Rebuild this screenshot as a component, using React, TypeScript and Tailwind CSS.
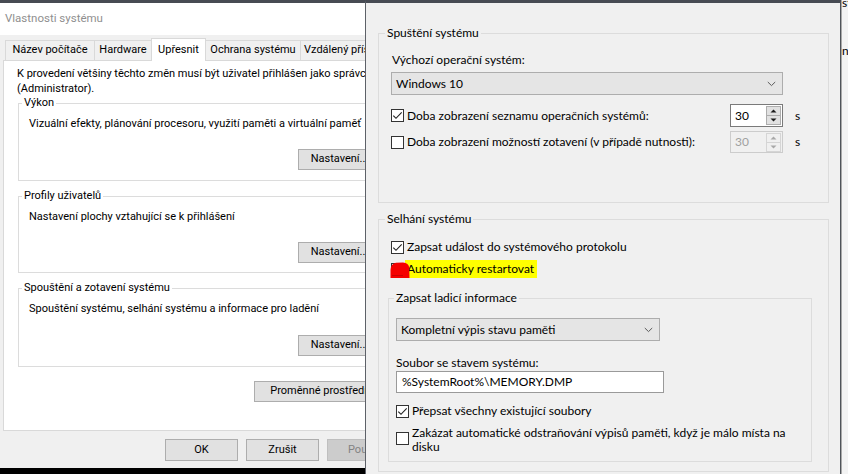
import React from "react";

function Check({ checked = false, className = "" }: { checked?: boolean; className?: string }) {
  return (
    <span className={"w-[13px] h-[13px] shrink-0 border border-[#333333] bg-white flex items-center justify-center " + className}>
      {checked && (
        <svg width="11" height="11" viewBox="0 0 11 11">
          <path d="M1.3 5.6 L4 8.3 L9.7 2.3" fill="none" stroke="#222222" strokeWidth="1.15" />
        </svg>
      )}
    </span>
  );
}

function Chevron() {
  return (
    <svg width="9" height="6" viewBox="0 0 9 6">
      <path d="M0.8 1 L4.5 4.6 L8.2 1" fill="none" stroke="#5a5a5a" strokeWidth="1" />
    </svg>
  );
}

function Combo({ children, className = "" }: { children: React.ReactNode; className?: string }) {
  return (
    <div className={"h-[23px] border border-[#adadad] bg-[#e5e5e5] flex items-center justify-between pl-[4px] pr-[6px] " + className}>
      <span>{children}</span>
      <Chevron />
    </div>
  );
}

function Arrow({ up, color }: { up: boolean; color: string }) {
  return (
    <svg width="7" height="4" viewBox="0 0 7 4">
      {up ? <path d="M0.5 3.5 L3.5 0.5 L6.5 3.5 Z" fill={color} /> : <path d="M0.5 0.5 L3.5 3.5 L6.5 0.5 Z" fill={color} />}
    </svg>
  );
}

function Spin({ disabled = false, className = "" }: { disabled?: boolean; className?: string }) {
  return (
    <div
      className={
        "w-[53px] flex items-stretch border " +
        (disabled ? "h-[22px] border-[#cccccc] bg-[#f0f0f0] text-[#a0a0a0] " : "h-[23px] border-[#7a7a7a] bg-white text-black ") +
        className
      }
    >
      <span className="flex-1 flex items-center pl-[4px]">30</span>
      <div className="flex flex-col justify-center gap-0 pr-px">
        <div className={"w-[15px] h-[10px] border flex items-center justify-center " + (disabled ? "border-[#d5d5d5] bg-[#f0f0f0]" : "border-[#adadad] bg-[#e1e1e1]")}>
          <Arrow up color={disabled ? "#a8a8a8" : "#1a1a1a"} />
        </div>
        <div className={"w-[15px] h-[10px] border -mt-px flex items-center justify-center " + (disabled ? "border-[#d5d5d5] bg-[#f0f0f0]" : "border-[#adadad] bg-[#e1e1e1]")}>
          <Arrow up={false} color={disabled ? "#a8a8a8" : "#1a1a1a"} />
        </div>
      </div>
    </div>
  );
}

function LBtn({ children, className = "", disabled = false }: { children: React.ReactNode; className?: string; disabled?: boolean }) {
  return (
    <button
      type="button"
      className={
        "flex items-center justify-center border whitespace-nowrap " +
        (disabled ? "border-[#bfbfbf] bg-[#cccccc] text-[#838383] " : "border-[#adadad] bg-[#e1e1e1] text-black ") +
        className
      }
    >
      {children}
    </button>
  );
}

function Tab({ children, w, selected = false, first = false }: { children: React.ReactNode; w: string; selected?: boolean; first?: boolean }) {
  return (
    <div
      className={
        "flex items-center border-t border-l border-r border-[#d9d9d9] whitespace-nowrap shrink-0 " +
        (first ? "" : "-ml-px ") +
        (selected ? "h-[23px] -mb-px bg-white relative z-10 " : "h-[20px] bg-[#f0f0f0] ") +
        w
      }
    >
      {children}
    </div>
  );
}

function LeftDialog() {
  return (
    <div className="w-[365px] h-[474px] shrink-0 overflow-hidden bg-black">
      <div className="w-[410px] h-[468px] bg-[#f0f0f0] border-t-[3px] border-[#474b53] flex flex-col font-['Roboto',sans-serif] text-[11px] text-black">
        <div className="h-[32px] bg-white pl-[5px] flex items-center text-[#8f8f8f] text-[11.5px]">Vlastnosti systému</div>
        <div className="px-[3px] pt-[3px] flex flex-col">
          <div className="flex items-end h-[22px] pl-[2px] relative z-10">
            <Tab w="w-[90px] justify-center" first>Název počítače</Tab>
            <Tab w="w-[58px] justify-center">Hardware</Tab>
            <Tab w="w-[55px] justify-center" selected>Upřesnit</Tab>
            <Tab w="w-[96px] justify-center">Ochrana systému</Tab>
            <Tab w="w-[96px] pl-[3px]">Vzdálený přístup</Tab>
          </div>
          <div className="h-[371px] bg-white border border-[#d9d9d9] px-[14px] pt-[5px] flex flex-col">
            <p className="leading-[15px] whitespace-nowrap -ml-px">
              K provedení většiny těchto změn musí být uživatel přihlášen jako správce
              <br />
              (Administrator).
            </p>
            <fieldset className="min-w-0 border border-[#dcdcdc] -mt-px px-[10px] pt-[5px] pb-[10px]">
              <legend className="-ml-[7px] px-[2px] leading-[16px]">Výkon</legend>
              <div className="leading-[15px] whitespace-nowrap">Vizuální efekty, plánování procesoru, využití paměti a virtuální paměť</div>
              <div className="flex justify-end mt-[18px]">
                <LBtn className="w-[83px] h-[21px]">Nastavení...</LBtn>
              </div>
            </fieldset>
            <fieldset className="min-w-0 border border-[#dcdcdc] mt-[7px] px-[10px] pt-[5px] pb-[9px]">
              <legend className="-ml-[7px] px-[2px] leading-[16px]">Profily uživatelů</legend>
              <div className="leading-[15px] whitespace-nowrap">Nastavení plochy vztahující se k přihlášení</div>
              <div className="flex justify-end mt-[18px]">
                <LBtn className="w-[83px] h-[21px]">Nastavení...</LBtn>
              </div>
            </fieldset>
            <fieldset className="min-w-0 border border-[#dcdcdc] mt-[7px] px-[10px] pt-[5px] pb-[10px]">
              <legend className="-ml-[7px] px-[2px] leading-[16px]">Spouštění a zotavení systému</legend>
              <div className="leading-[15px] whitespace-nowrap">Spouštění systému, selhání systému a informace pro ladění</div>
              <div className="flex justify-end mt-[19px]">
                <LBtn className="w-[83px] h-[21px]">Nastavení...</LBtn>
              </div>
            </fieldset>
            <div className="flex justify-end mt-[14px]">
              <LBtn className="w-[138px] h-[21px]">Proměnné prostředí...</LBtn>
            </div>
          </div>
          <div className="flex justify-end gap-[8px] pr-[7px] mt-[8px]">
            <LBtn className="w-[73px] h-[22px]">OK</LBtn>
            <LBtn className="w-[73px] h-[22px]">Zrušit</LBtn>
            <LBtn className="w-[73px] h-[22px]" disabled>Použít</LBtn>
          </div>
        </div>
      </div>
    </div>
  );
}

function RightDialog() {
  return (
    <div className="w-[476px] h-[474px] shrink-0 overflow-hidden bg-[#f0f0f0] border-t-[3px] border-t-[#474b53] border-l border-l-[#5d6168] border-r border-r-[#50545a] pl-[12px] pr-[11px] pt-[21px] font-['Lato',sans-serif] text-[12px] text-black">
      <fieldset className="min-w-0 border border-[#dcdcdc] px-[12px] pt-[9px] pb-[49px]">
        <legend className="-ml-[6px] px-[2px] leading-[18px]">Spuštění systému</legend>
        <div className="leading-[18px] pl-px">Výchozí operační systém:</div>
        <Combo className="mt-[3px] w-[392px]">Windows 10</Combo>
        <div className="flex items-center h-[23px] mt-[9px]">
          <Check checked />
          <span className="ml-[3px] w-[323px] leading-[18px]">Doba zobrazení seznamu operačních systémů:</span>
          <Spin />
          <span className="ml-[12px]">s</span>
        </div>
        <div className="flex items-center h-[22px] mt-[4px]">
          <Check />
          <span className="ml-[3px] w-[323px] leading-[18px]">Doba zobrazení možností zotavení (v případě nutnosti):</span>
          <Spin disabled />
          <span className="ml-[12px]">s</span>
        </div>
      </fieldset>
      <fieldset className="min-w-0 mt-[7px] border border-[#dcdcdc] pl-[9px] pr-[16px] pt-[10px] pb-[9px]">
        <legend className="-ml-[3px] px-[2px] leading-[18px]">Selhání systému</legend>
        <div className="flex items-center h-[18px] ml-[3px]">
          <Check checked />
          <span className="ml-[3px] leading-[18px]">Zapsat událost do systémového protokolu</span>
        </div>
        <div className="relative flex items-center h-[18px] ml-[3px] mt-[4px]">
          <Check />
          <span className="ml-[1px] pl-[2px] pr-[3px] h-[18px] leading-[18px] bg-[#ffff00]">Automaticky restartovat</span>
          <svg className="absolute left-[-1px] top-[2px]" width="20" height="16" viewBox="0 0 20 16">
            <path d="M0.5 16 L0.5 8 Q0.8 1.5 6 0.8 L13 0.5 Q18.6 1 19.2 5.5 L19.5 16 Z" fill="#f50000" />
            <path d="M2 13.5 L13 13.5" stroke="#b00000" strokeWidth="1" opacity="0.6" />
          </svg>
        </div>
        <fieldset className="min-w-0 mt-[11px] border border-[#dcdcdc] px-[7px] pt-[11px] pb-[7px]">
          <legend className="-ml-[2px] px-[2px] leading-[18px]">Zapsat ladicí informace</legend>
          <Combo className="w-[264px]">Kompletní výpis stavu paměti</Combo>
          <div className="mt-[14px] leading-[16px]">Soubor se stavem systému:</div>
          <div className="h-[22px] w-[268px] border border-[#9a9a9a] bg-white pl-[5px] flex items-center">%SystemRoot%\MEMORY.DMP</div>
          <div className="flex items-center h-[18px] mt-[9px]">
            <Check checked />
            <span className="ml-[3px] leading-[18px]">Přepsat všechny existující soubory</span>
          </div>
          <div className="flex items-start mt-[6px]">
            <Check className="mt-[6px]" />
            <span className="ml-[3px] leading-[14px] whitespace-nowrap">
              Zakázat automatické odstraňování výpisů paměti, když je málo místa na
              <br />
              disku
            </span>
          </div>
        </fieldset>
      </fieldset>
    </div>
  );
}

function RightStrip() {
  return (
    <div className="w-[7px] h-[474px] shrink-0 overflow-hidden bg-[#f3f3f3] border-l border-[#a9a9a9] font-['Lato',sans-serif] text-[12px] text-black whitespace-nowrap">
      <div className="leading-[14px] -mt-[4px]">stav</div>
      <div className="leading-[14px] mt-[34px]">nu</div>
    </div>
  );
}

export default function App() {
  return (
    <div className="w-[848px] h-[474px] overflow-hidden flex bg-black">
      <LeftDialog />
      <RightDialog />
      <RightStrip />
    </div>
  );
}
